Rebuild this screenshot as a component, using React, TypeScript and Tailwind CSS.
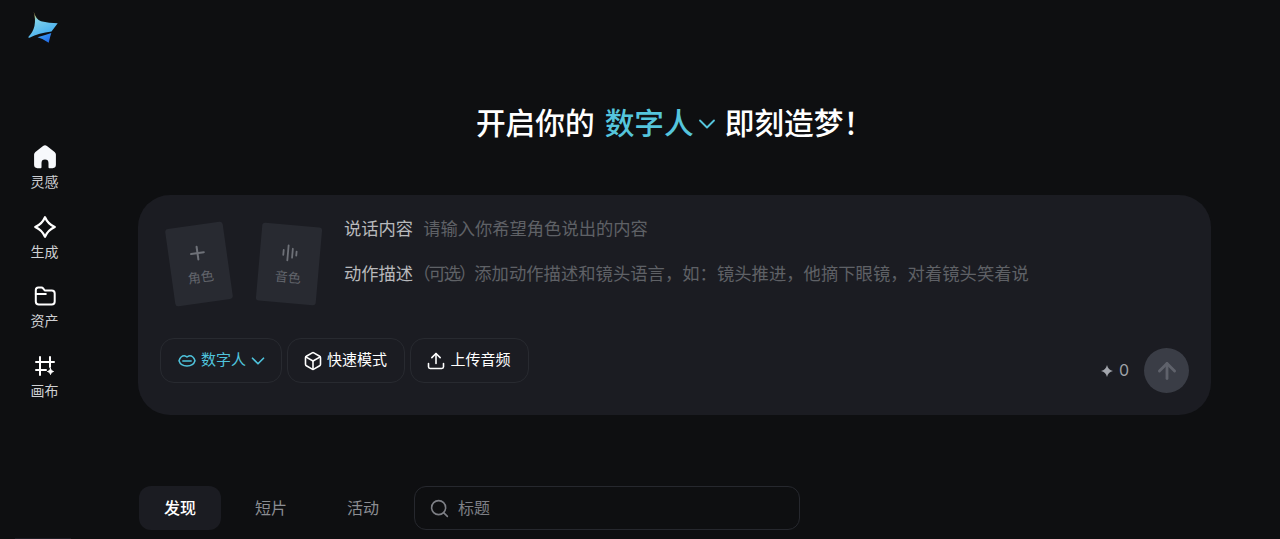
import { ChevronDown, Box, Upload, ArrowUp, Search, Plus } from "lucide-react";

function Logo() {
  return (
    <svg width="32" height="33" viewBox="0 0 32 33" className="block">
      <defs>
        <linearGradient id="logoTop" x1="0.15" y1="0" x2="0.65" y2="0.9">
          <stop offset="0" stopColor="#e8963a" />
          <stop offset="0.16" stopColor="#b9c47c" />
          <stop offset="0.34" stopColor="#7ed0ea" />
          <stop offset="1" stopColor="#45aef0" />
        </linearGradient>
        <linearGradient id="logoBottom" x1="0" y1="0" x2="1" y2="1">
          <stop offset="0" stopColor="#43aaf5" />
          <stop offset="1" stopColor="#1c62e6" />
        </linearGradient>
      </defs>
      <path d="M6.700.7Q9 8.500 14 10.300Q22 12.300 30.700 12.300L24.500 20.500Q12 22 2.500 26.800Q1 27 1.300 26Q11 16 6.700.7Z" fill="url(#logoTop)" />
      <path d="M10.500 26.300Q17 24.500 24.300 22Q23 26 21.700 31.700Q17 28 10.500 26.300Z" fill="url(#logoBottom)" />
    </svg>
  );
}

function NavItem({ icon, label }: { icon: React.ReactNode; label: string }) {
  return (
    <div className="flex h-[69.5px] flex-col items-center">
      <div className="flex h-6 w-6 items-center justify-center text-white">{icon}</div>
      <span className="mt-[4px] text-sm leading-[18px] text-[#cfd0d3]">{label}</span>
    </div>
  );
}

function HomeIcon() {
  return (
    <svg width="24" height="24" viewBox="1 1 22 22" fill="#f7f9fc">
      <path d="M10.200 1.900a2.900 2.900 0 0 1 3.600 0l7 5.500a3 3 0 0 1 1.200 2.400v9.400a3 3 0 0 1-3 3h-3a.8.8 0 0 1-.8-.8v-3.900a3.200 3.200 0 0 0-6.400 0v3.900a.8.8 0 0 1-.8.8H5a3 3 0 0 1-3-3V9.800a3 3 0 0 1 1.200-2.400z" />
    </svg>
  );
}

function SparkIcon() {
  return (
    <svg width="24" height="24" viewBox="0 0 24 24" fill="none" stroke="#fff" strokeWidth="2.200" strokeLinejoin="round">
      <path d="M12 2.200C14 6.800 17.200 10 21.800 12C17.200 14 14 17.200 12 21.800C10 17.200 6.800 14 2.200 12C6.800 10 10 6.800 12 2.200Z" />
    </svg>
  );
}

function FolderIcon() {
  return (
    <svg width="24" height="24" viewBox="0 0 24 24" fill="none" stroke="#fff" strokeWidth="2" strokeLinecap="round" strokeLinejoin="round">
      <path d="M2.800 9.500V6a2.500 2.500 0 0 1 2.500-2.500h3.200a2 2 0 0 1 1.600.8l1.700 2.200h6.900a3 3 0 0 1 3 3v8a3 3 0 0 1-3 3H5.800a3 3 0 0 1-3-3z" />
      <path d="M2.800 10h10" />
    </svg>
  );
}

function CanvasIcon() {
  return (
    <svg width="24" height="24" viewBox="0 0 24 24" fill="none" stroke="#fff" strokeWidth="2" strokeLinecap="round">
      <path d="M7 3v18M17 3v10M3 8h18M3 16h10" />
      <path d="M17.500 14.500l.9 2.100 2.100.9-2.100.9-.9 2.100-.9-2.100-2.100-.9 2.100-.9z" fill="#fff" strokeWidth="1" strokeLinejoin="round" />
    </svg>
  );
}

function LipsIcon() {
  return (
    <svg width="18" height="18" viewBox="0 0 18 18" fill="none" stroke="#4fc3dc" strokeWidth="1.500" strokeLinejoin="round" strokeLinecap="round">
      <path d="M1 8.800C2 5.800 4.500 3.800 6.300 3.800C7.500 3.800 8.300 4.900 9 4.900C9.700 4.900 10.500 3.800 11.700 3.800C13.500 3.800 16 5.800 17 8.800C16 12 13 14 9 14C5 14 2 12 1 8.800Z" />
      <path d="M4.800 9H13.200" />
    </svg>
  );
}

function WaveIcon() {
  return (
    <svg width="20" height="20" viewBox="0 0 20 20" fill="none" stroke="#6e7178" strokeWidth="1.800" strokeLinecap="round">
      <path d="M3.500 7.500v5M8 2.500v15M12.500 5.500v9M16.500 8v4" />
    </svg>
  );
}

function StarSmall() {
  return (
    <svg width="14" height="14" viewBox="0 0 14 14" fill="#a3a6ad">
      <path d="M7 1C7.800 4.300 9.700 6.200 13 7C9.700 7.800 7.800 9.700 7 13C6.200 9.700 4.300 7.800 1 7C4.300 6.200 6.200 4.300 7 1Z" />
    </svg>
  );
}

function Chip({ children, className }: { children: React.ReactNode; className: string }) {
  return (
    <div className={`flex h-[45px] items-center justify-center rounded-[14px] border border-[#282a30] text-[15px] ${className}`}>
      {children}
    </div>
  );
}

export default function App() {
  return (
    <div className="flex h-[539px] w-full overflow-hidden bg-[#0e0f11] font-['Inter','Noto_Sans_CJK_SC',sans-serif]">
      <aside className="flex w-[89px] shrink-0 flex-col items-center pt-[11px]">
        <div className="-ml-1">
          <Logo />
        </div>
        <nav className="mt-[101px] flex flex-col">
          <NavItem icon={<HomeIcon />} label="灵感" />
          <NavItem icon={<SparkIcon />} label="生成" />
          <NavItem icon={<FolderIcon />} label="资产" />
          <NavItem icon={<CanvasIcon />} label="画布" />
        </nav>
        <div className="mt-auto h-px w-[56px] -translate-x-[2px] bg-[#1d1d24]" />
      </aside>

      <main className="flex-1 pr-[69px] pl-[49px]">
        <h1 className="mt-[103px] flex h-[40px] items-center justify-center text-[29.7px] font-medium text-white">
          <span>开启你的</span>
          <span className="ml-[10px] text-[#55c5dc]">数字人</span>
          <ChevronDown size={28} strokeWidth={1.600} className="mt-[2px] mr-[4px] -ml-[1px] text-[#55c5dc]" />
          <span>即刻造梦！</span>
        </h1>

        <section className="mt-[52px] flex h-[220px] flex-col rounded-[32px] bg-[#1b1c22] px-[22px] pt-[22px] pb-[22px]">
          <div className="flex flex-1">
            <div className="flex w-[184px] shrink-0 pt-[8px]">
              <div className="ml-[10px] flex h-[78px] w-[58px] rotate-[-8deg] flex-col items-center rounded-[3px] bg-[#282a31] pt-[17px] text-[#6e7178]">
                <Plus size={22} strokeWidth={2.200} />
                <span className="mt-[4px] text-[13px] text-[#62656c]">角色</span>
              </div>
              <div className="ml-[31px] flex h-[78px] w-[60px] rotate-[5deg] flex-col items-center rounded-[3px] bg-[#282a31] pt-[18px] text-[#6e7178]">
                <WaveIcon />
                <span className="mt-[5px] text-[13px] text-[#62656c]">音色</span>
              </div>
            </div>
            <div className="flex flex-col text-[17.3px] leading-6">
              <p>
                <span className="text-[#b8b9bc]">说话内容</span>
                <span className="ml-[10px] text-[#5f6166]">请输入你希望角色说出的内容</span>
              </p>
              <p className="mt-[21px]">
                <span className="text-[#b8b9bc]">动作描述</span>
                <span className="tracking-[-2px] text-[#5f6166]">（可选）</span>
                <span className="tracking-[0.05px] text-[#5f6166]">添加动作描述和镜头语言，如：镜头推进，他摘下眼镜，对着镜头笑着说</span>
              </p>
            </div>
          </div>

          <div className="flex items-end justify-between">
            <div className="mb-[10px] flex gap-[5px]">
              <Chip className="w-[122px] gap-[6px]">
                <LipsIcon />
                <span className="-ml-px text-[#4fc3dc]">数字人</span>
                <ChevronDown size={22} strokeWidth={1.800} className="-mx-[5px] text-[#4fc3dc]" />
              </Chip>
              <Chip className="w-[118px] gap-[4px] pr-[2px]">
                <Box size={20} strokeWidth={1.900} className="text-white" />
                <span className="text-white">快速模式</span>
              </Chip>
              <Chip className="w-[119px] gap-[4px] pr-[2px]">
                <Upload size={20} strokeWidth={1.900} className="text-white" />
                <span className="text-white">上传音频</span>
              </Chip>
            </div>
            <div className="flex items-center">
              <StarSmall />
              <span className="-mt-[2px] ml-[5px] text-base text-[#9fa2a8]">0</span>
              <div className="ml-[15px] flex h-[45px] w-[45px] items-center justify-center rounded-full bg-[#3a3d46]">
                <ArrowUp size={26} strokeWidth={2.600} className="text-[#5f626b]" />
              </div>
            </div>
          </div>
        </section>

        <div className="mt-[71px] ml-px flex items-center">
          <div className="flex h-[44px] w-[82px] items-center justify-center rounded-xl bg-[#1b1c22] text-base font-medium text-white">发现</div>
          <div className="flex h-[44px] w-[100px] items-center justify-center text-base text-[#8b8d92]">短片</div>
          <div className="flex h-[44px] w-[84px] items-center justify-center text-base text-[#8b8d92]">活动</div>
          <div className="ml-[9px] flex h-[44px] w-[386px] items-center gap-[7px] rounded-xl border border-[#26282e] pl-[14px] text-[#7d7f85]">
            <Search size={21} strokeWidth={1.800} />
            <span className="ml-px text-base">标题</span>
          </div>
        </div>
      </main>
    </div>
  );
}
